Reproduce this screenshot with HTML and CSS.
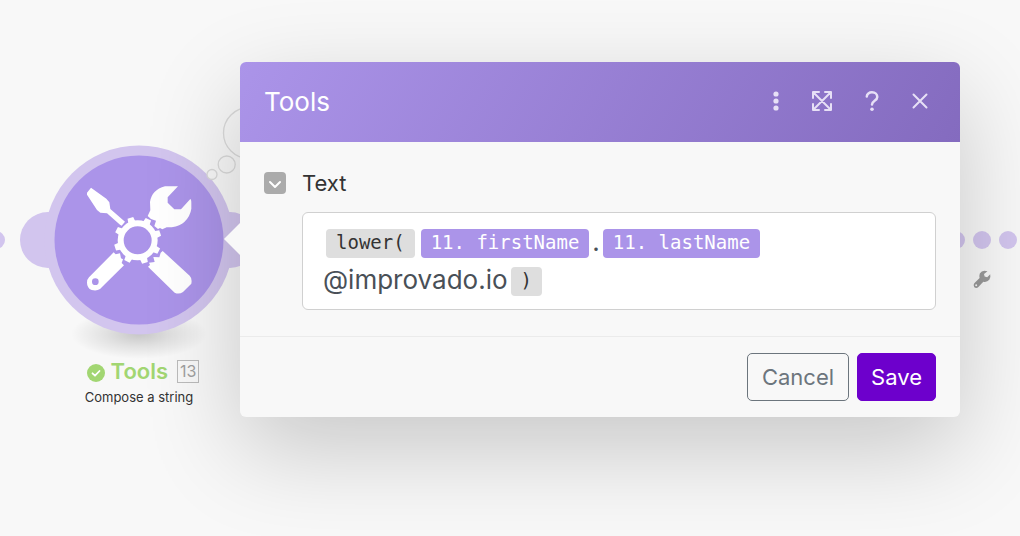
FILE: index.html
```html
<!DOCTYPE html>
<html lang="en">
<head>
<meta charset="utf-8">
<meta name="viewport" content="width=device-width, initial-scale=1">
<title>Tools</title>
<link rel="stylesheet" href="styles.css">
</head>
<body>
<main class="canvas">
  <svg class="scene" width="1020" height="536" viewBox="0 0 1020 536" aria-hidden="true">
    <defs>
      <radialGradient id="floor">
        <stop offset="0" stop-color="#000" stop-opacity=".2"/>
        <stop offset=".5" stop-color="#000" stop-opacity=".09"/>
        <stop offset="1" stop-color="#000" stop-opacity="0"/>
      </radialGradient>
    </defs>
    <ellipse cx="139" cy="334" rx="68" ry="25" fill="url(#floor)"/>
    <g fill="#d2c5ee">
      <circle cx="-4" cy="240" r="9"/>
      <circle cx="956" cy="240" r="9"/>
      <circle cx="982" cy="240" r="9"/>
      <circle cx="1008" cy="240" r="9"/>
      <circle cx="48" cy="240" r="28"/>
      <circle cx="230" cy="240" r="28"/>
      <circle cx="139" cy="240" r="94.5"/>
    </g>
    <circle cx="139" cy="240" r="84.5" fill="#ab94e9"/>
    <g fill="#f8f8f8" stroke="#dadada" stroke-width="1.3">
      <circle cx="249" cy="133" r="25.5"/>
      <circle cx="226.700" cy="164.500" r="8.500"/>
      <circle cx="212" cy="174.500" r="5"/>
    </g>
    <svg x="75" y="170" width="130" height="140" viewBox="0 0 390 420" fill="#fff">
      <path d="M48 53 94 86 103 97 106 117 150 155 140 167 135 164 96 130 76 128 66 120 36 74V68Z"/>
      <path d="M270 49H309L278 82V98L298 118H318L346 87Q349 88 349 100V116Q346 138 328 156 316 168 290 172H275L262 178 255 174 249 177 238 168 243 152 228 147 218 138 226 121 225 96Q230 60 270 49Z"/>
      <path fill-rule="evenodd" d="M116 247 122 253 135 250 138 265 144 268 140 279 147 286 75 357Q65 364 50 360 36 354 36 338 36 328 42 322ZM61 325A10 10 0 1 0 61 345 10 10 0 1 0 61 325Z"/>
      <path d="M263 243 344 317Q352 325 349 341L324 366Q312 374 299 368L219 290 225 285 222 278 239 276 235 261 253 262 257 248Z"/>
      <circle cx="188" cy="211" r="51" fill="none" stroke="#fff" stroke-width="18"/>
      <g transform="translate(188 211)">
        <path id="tooth" d="M55-11 71-9V9L55 11Z" transform="rotate(27)"/>
        <use href="#tooth" transform="rotate(45)"/>
        <use href="#tooth" transform="rotate(90)"/>
        <use href="#tooth" transform="rotate(135)"/>
        <use href="#tooth" transform="rotate(180)"/>
        <use href="#tooth" transform="rotate(225)"/>
        <use href="#tooth" transform="rotate(270)"/>
        <use href="#tooth" transform="rotate(315)"/>
      </g>
    </svg>
    <path fill="#999" d="M987.500 271.200Q982 269.500 979.800 273.500 979 276 979.600 278L974.300 283.200Q972.600 285.500 974.300 287.200 976.400 288.900 978.400 286.900L983.300 281.700Q987 282.500 989.300 279.800 991 277.500 990.200 274.300L987.200 277.200 984.600 276.600 984 274.100ZM976.200 284.300A1 1 0 1 1 976.200 286.300 1 1 0 1 1 976.200 284.300Z" fill-rule="evenodd"/>
  </svg>

  <section class="node">
    <div class="node-title">
      <svg width="18" height="18" viewBox="0 0 18 18" aria-hidden="true"><circle cx="9" cy="9" r="9" fill="#a2d672"/><path d="M5.500 9.300 8 11.700 12.500 7" fill="none" stroke="#fff" stroke-width="1.800" stroke-linecap="round" stroke-linejoin="round"/></svg>
      <h2 class="node-name">Tools</h2>
      <span class="node-number">13</span>
    </div>
    <p class="node-caption">Compose a string</p>
  </section>

  <form class="panel" role="dialog" aria-labelledby="panel-title">
    <header class="panel-header">
      <h1 class="panel-title" id="panel-title">Tools</h1>
      <div class="tools">
        <button class="tool" type="button" aria-label="More options">
          <svg width="16" height="24" viewBox="4 0 16 24" fill="currentColor"><circle cx="12" cy="5" r="2.600"/><circle cx="12" cy="12" r="2.600"/><circle cx="12" cy="19" r="2.600"/></svg>
        </button>
        <button class="tool" type="button" aria-label="Expand">
          <svg width="28" height="24" viewBox="-2 0 28 24" class="line"><path d="M3 9V3H9M15 3H21V9M21 15V21H15M9 21H3V15M3.500 3.500 20.500 20.500M20.500 3.500 3.500 20.500"/></svg>
        </button>
        <button class="tool" type="button" aria-label="Help">
          <svg width="24" height="24" viewBox="0 0 24 24" class="line"><path stroke-width="2.500" d="M6.800 7.500C6.800 4.800 9.200 3.300 12 3.300 15.200 3.300 17.300 5.200 17.300 7.900 17.300 11.800 12 11.700 12 15.500"/><circle cx="12" cy="20.300" r="1.800" fill="currentColor" stroke="none"/></svg>
        </button>
        <button class="tool" type="button" aria-label="Close">
          <svg width="24" height="24" viewBox="0 0 24 24" class="line"><path d="M5.500 5.500 18.500 18.500M18.500 5.500 5.500 18.500"/></svg>
        </button>
      </div>
    </header>
    <div class="panel-body">
      <button class="toggle" type="button" aria-label="Collapse Text">
        <svg width="22" height="22" viewBox="0 0 22 22"><path d="M6 10 11 15 16 10" fill="none" stroke="#fff" stroke-width="2" stroke-linecap="round" stroke-linejoin="round"/></svg>
      </button>
      <div class="field">
        <span class="field-label" id="text-label">Text</span>
        <div class="editor" role="textbox" contenteditable="true" spellcheck="false" aria-labelledby="text-label"><span class="chip">lower(</span><span class="chip chip-value">11. firstName</span>.<span class="chip chip-value">11. lastName</span>@improvado.io<span class="chip">)</span></div>
      </div>
    </div>
    <footer class="panel-footer">
      <button class="btn btn-outline" type="button">Cancel</button>
      <button class="btn btn-primary" type="submit">Save</button>
    </footer>
  </form>
</main>
</body>
</html>
```
FILE: styles.css
```css
* {
  box-sizing: border-box;
}

body {
  margin: 0;
  background: #f8f8f8;
  color: #333;
  font-family: Inter, "Liberation Sans", sans-serif;
}

h1,
h2,
p {
  margin: 0;
}

button {
  font: inherit;
  cursor: pointer;
}

svg {
  display: block;
}

.canvas {
  position: relative;
  min-height: 100vh;
  overflow: hidden;
}

.scene {
  position: absolute;
  top: 0;
  left: 0;
}

.node {
  position: absolute;
  top: 358px;
  left: 49px;
  width: 180px;
}

.node-title {
  display: flex;
  align-items: center;
  justify-content: center;
  gap: 6px;
  padding-left: 8px;
}

.node-name {
  color: #a2d672;
  font-size: 22px;
  font-weight: 600;
  line-height: 26px;
}

.node-title svg {
  margin-top: 4px;
}

.node-number {
  margin-left: 3px;
  padding: 0 2px;
  border: 1px solid #bbb;
  color: #a0a0a0;
  font-size: 16px;
  line-height: 21px;
}

.node-caption {
  margin-top: 4px;
  font-size: 13px;
  line-height: 18px;
  text-align: center;
}

.panel {
  position: absolute;
  top: 62px;
  left: 240px;
  right: 60px;
  border-radius: 6px;
  background: #f8f8f8;
  box-shadow: 0 32px 96px rgba(0, 0, 0, 0.2);
}

.panel::before {
  content: "";
  position: absolute;
  top: 161px;
  left: -16px;
  border: solid transparent;
  border-width: 16px 16px 16px 0;
  border-right-color: #f8f8f8;
}

.panel-header {
  display: flex;
  align-items: center;
  justify-content: space-between;
  height: 80px;
  padding: 0 28px 2px 24px;
  border-radius: 6px 6px 0 0;
  background: linear-gradient(120deg, #ab94e9, #846bbf);
  color: #fff;
}

.panel-title {
  font-size: 26px;
  font-weight: 400;
}

.tools {
  display: flex;
  gap: 24px;
  padding-bottom: 1px;
}

.tool {
  padding: 0;
  border: 0;
  background: none;
  color: #e7e0f6;
}

.line {
  fill: none;
  stroke: currentColor;
  stroke-width: 2;
  stroke-linecap: round;
  stroke-linejoin: round;
}

.panel-body {
  display: flex;
  align-items: flex-start;
  gap: 16px;
  padding: 26px 24px;
}

.toggle {
  margin-top: 4px;
  padding: 0;
  border: 0;
  border-radius: 4px;
  background: #ababab;
}

.field {
  flex: 1;
}

.field-label {
  display: block;
  margin-bottom: 14px;
  font-size: 22px;
  line-height: 30px;
}

.editor {
  padding: 10px 20px;
  border: 1px solid #d0d0d0;
  border-radius: 6px;
  background: #fff;
  color: #495057;
  font-size: 26px;
  line-height: 38px;
}

.chip {
  display: inline-block;
  margin: 0 3px;
  padding: 0 10px 2px;
  border-radius: 4px;
  background: #dedede;
  color: #333;
  font-family: "DejaVu Sans Mono", monospace;
  font-size: 19px;
  line-height: 27px;
  vertical-align: middle;
}

.chip-value {
  background: #ab94e9;
  color: #fff;
}

.panel-footer {
  display: flex;
  justify-content: flex-end;
  gap: 8px;
  padding: 16px 24px;
  border-top: 1px solid #ebebeb;
}

.btn {
  height: 48px;
  padding: 0 13px;
  border: 1px solid;
  border-radius: 5px;
  font-size: 22px;
}

.btn-outline {
  padding: 0 14px;
  border-color: #6c757d;
  background: transparent;
  color: #6c757d;
}

.btn-primary {
  border-color: #6d00cc;
  background: #6d00cc;
  color: #fff;
}
```
